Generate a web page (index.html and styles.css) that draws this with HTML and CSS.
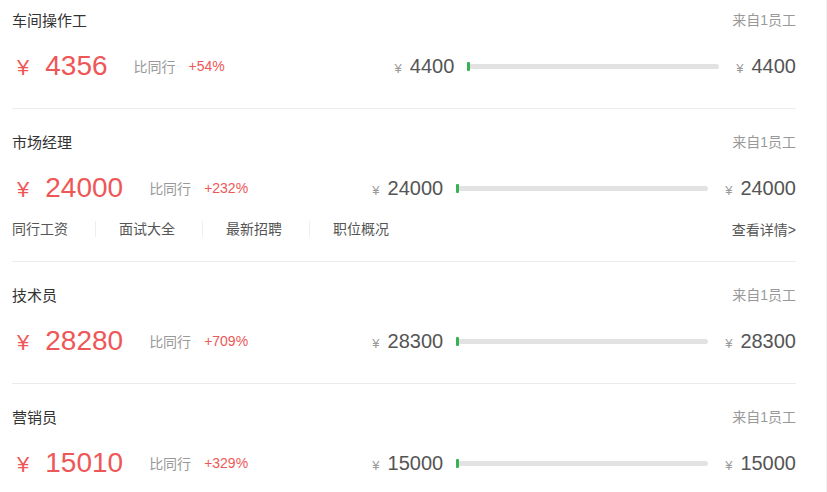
FILE: index.html
```html
<!DOCTYPE html>
<html lang="zh-CN">

<head>
    <meta charset="UTF-8">
    <title>工资</title>
    <link rel="stylesheet" href="styles.css">
</head>

<body>
    <div class="page">
        <ul class="job-list">
            <li class="job">
                <div class="job-head">
                    <span class="job-name">车间操作工</span>
                    <span class="job-source">来自1员工</span>
                </div>
                <div class="job-salary">
                    <div class="salary-main">
                        <span class="salary-value"><em>¥</em>4356</span>
                        <span class="compare">比同行</span>
                        <span class="compare-rate">+54%</span>
                    </div>
                    <div class="salary-range">
                        <span class="range-value"><em>¥</em>4400</span>
                        <div class="range-bar"><i></i></div>
                        <span class="range-value"><em>¥</em>4400</span>
                    </div>
                </div>
            </li>
            <li class="job">
                <div class="job-head">
                    <span class="job-name">市场经理</span>
                    <span class="job-source">来自1员工</span>
                </div>
                <div class="job-salary">
                    <div class="salary-main">
                        <span class="salary-value"><em>¥</em>24000</span>
                        <span class="compare">比同行</span>
                        <span class="compare-rate">+232%</span>
                    </div>
                    <div class="salary-range">
                        <span class="range-value"><em>¥</em>24000</span>
                        <div class="range-bar"><i></i></div>
                        <span class="range-value"><em>¥</em>24000</span>
                    </div>
                </div>
                <div class="job-links">
                    <div class="link-group">
                        <a href="#">同行工资</a>
                        <a href="#">面试大全</a>
                        <a href="#">最新招聘</a>
                        <a href="#">职位概况</a>
                    </div>
                    <a href="#" class="more">查看详情&gt;</a>
                </div>
            </li>
            <li class="job">
                <div class="job-head">
                    <span class="job-name">技术员</span>
                    <span class="job-source">来自1员工</span>
                </div>
                <div class="job-salary">
                    <div class="salary-main">
                        <span class="salary-value"><em>¥</em>28280</span>
                        <span class="compare">比同行</span>
                        <span class="compare-rate">+709%</span>
                    </div>
                    <div class="salary-range">
                        <span class="range-value"><em>¥</em>28300</span>
                        <div class="range-bar"><i></i></div>
                        <span class="range-value"><em>¥</em>28300</span>
                    </div>
                </div>
            </li>
            <li class="job">
                <div class="job-head">
                    <span class="job-name">营销员</span>
                    <span class="job-source">来自1员工</span>
                </div>
                <div class="job-salary">
                    <div class="salary-main">
                        <span class="salary-value"><em>¥</em>15010</span>
                        <span class="compare">比同行</span>
                        <span class="compare-rate">+329%</span>
                    </div>
                    <div class="salary-range">
                        <span class="range-value"><em>¥</em>15000</span>
                        <div class="range-bar"><i></i></div>
                        <span class="range-value"><em>¥</em>15000</span>
                    </div>
                </div>
            </li>
        </ul>
    </div>
</body>

</html>
```

FILE: styles.css
```css
body {
    margin: 0;
    background-color: #fff;
    font-family: "Liberation Sans", "Noto Sans CJK SC", sans-serif;
    color: #333;
}

.page {
    width: 826px;
    min-height: 492px;
    border-right: 1px solid #f0f0f0;
}

.job-list {
    list-style: none;
    margin: 0;
    padding: 0 30px 0 12px;
}

.job {
    padding: 22px 0 22px;
    border-bottom: 1px solid #ebebeb;
}

.job:first-child {
    padding-top: 9px;
}

.job-head {
    display: flex;
    justify-content: space-between;
    align-items: center;
    height: 20px;
}

.job-name {
    font-size: 15px;
    color: #333;
}

.job-source {
    font-size: 14px;
    color: #999;
}

.job-salary {
    display: flex;
    justify-content: space-between;
    align-items: center;
    height: 40px;
    margin-top: 17px;
}

.salary-main {
    display: flex;
    align-items: center;
}

.salary-value {
    font-size: 28px;
    color: #ee5757;
    margin-left: 5px;
}

.salary-value em {
    font-style: normal;
    font-size: 22px;
    margin-right: 16px;
}

.compare {
    font-size: 14px;
    color: #999;
    margin-left: 26px;
}

.compare-rate {
    font-size: 14px;
    color: #ee5757;
    margin-left: 13px;
}

.salary-range {
    display: flex;
    align-items: center;
}

.range-value {
    font-size: 20px;
    color: #555;
}

.range-value em {
    font-style: normal;
    font-size: 13px;
    color: #999;
    margin-right: 8px;
}

.range-bar {
    position: relative;
    width: 252px;
    height: 5px;
    margin: 0 17px 0 13px;
    border-radius: 3px;
    background-color: #e2e2e2;
}

/* green marker at the low end */
.range-bar i {
    position: absolute;
    left: 0;
    top: -2px;
    width: 3px;
    height: 9px;
    border-radius: 1px;
    background-color: #36b354;
}

.job-links {
    display: flex;
    justify-content: space-between;
    align-items: center;
    height: 20px;
    margin-top: 11px;
    font-size: 14px;
}

.job-links a {
    color: #555;
    text-decoration: none;
}

.link-group {
    display: flex;
    align-items: center;
}

.link-group a {
    padding: 0 27px 0 23px;
    border-left: 1px solid #eee;
    line-height: 16px;
}

.link-group a:first-child {
    padding-left: 0;
    border-left: none;
}

.more {
    color: #555;
}
```
